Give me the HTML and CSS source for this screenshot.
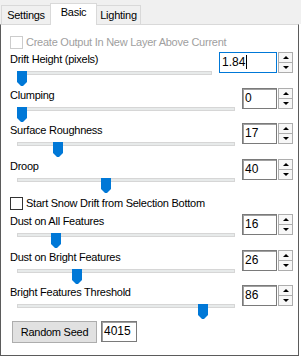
FILE: index.html
```html
<!DOCTYPE html>
<html lang="en">
<head>
    <meta charset="UTF-8">
    <title>Snow Drift</title>
    <link rel="stylesheet" href="styles.css">
</head>
<body>
    <div class="tabs">
        <div class="tab tab-settings">Settings</div>
        <div class="tab tab-basic active">Basic</div>
        <div class="tab tab-lighting">Lighting</div>
    </div>
    <div class="panel">
        <div class="check disabled"><span class="box"></span>Create Output In New Layer Above Current</div>

        <div class="field">
            <div class="ctl">
                <div class="label">Drift Height (pixels)</div>
                <div class="slider"><div class="track"></div><svg class="thumb" style="left: 0px" viewBox="0 0 10 15"><polygon points="0,0 10,0 10,11 6,15 4,15 0,11"/></svg></div>
            </div>
            <div class="spin wide focused">
                <div class="spin-value">1.84<span class="caret"></span></div>
                <div class="spin-btns"><span class="up"></span><span class="down"></span></div>
            </div>
        </div>

        <div class="field">
            <div class="ctl">
                <div class="label">Clumping</div>
                <div class="slider"><div class="track"></div><svg class="thumb" style="left: 0px" viewBox="0 0 10 15"><polygon points="0,0 10,0 10,11 6,15 4,15 0,11"/></svg></div>
            </div>
            <div class="spin">
                <div class="spin-value">0</div>
                <div class="spin-btns"><span class="up"></span><span class="down"></span></div>
            </div>
        </div>

        <div class="field">
            <div class="ctl">
                <div class="label">Surface Roughness</div>
                <div class="slider"><div class="track"></div><svg class="thumb" style="left: 36px" viewBox="0 0 10 15"><polygon points="0,0 10,0 10,11 6,15 4,15 0,11"/></svg></div>
            </div>
            <div class="spin">
                <div class="spin-value">17</div>
                <div class="spin-btns"><span class="up"></span><span class="down"></span></div>
            </div>
        </div>

        <div class="field">
            <div class="ctl">
                <div class="label">Droop</div>
                <div class="slider"><div class="track"></div><svg class="thumb" style="left: 84px" viewBox="0 0 10 15"><polygon points="0,0 10,0 10,11 6,15 4,15 0,11"/></svg></div>
            </div>
            <div class="spin">
                <div class="spin-value">40</div>
                <div class="spin-btns"><span class="up"></span><span class="down"></span></div>
            </div>
        </div>

        <div class="check second"><span class="box"></span>Start Snow Drift from Selection Bottom</div>

        <div class="field">
            <div class="ctl">
                <div class="label">Dust on All Features</div>
                <div class="slider"><div class="track"></div><svg class="thumb" style="left: 34px" viewBox="0 0 10 15"><polygon points="0,0 10,0 10,11 6,15 4,15 0,11"/></svg></div>
            </div>
            <div class="spin">
                <div class="spin-value">16</div>
                <div class="spin-btns"><span class="up"></span><span class="down"></span></div>
            </div>
        </div>

        <div class="field">
            <div class="ctl">
                <div class="label">Dust on Bright Features</div>
                <div class="slider"><div class="track"></div><svg class="thumb" style="left: 55px" viewBox="0 0 10 15"><polygon points="0,0 10,0 10,11 6,15 4,15 0,11"/></svg></div>
            </div>
            <div class="spin">
                <div class="spin-value">26</div>
                <div class="spin-btns"><span class="up"></span><span class="down"></span></div>
            </div>
        </div>

        <div class="field">
            <div class="ctl">
                <div class="label">Bright Features Threshold</div>
                <div class="slider"><div class="track"></div><svg class="thumb" style="left: 181px" viewBox="0 0 10 15"><polygon points="0,0 10,0 10,11 6,15 4,15 0,11"/></svg></div>
            </div>
            <div class="spin">
                <div class="spin-value">86</div>
                <div class="spin-btns"><span class="up"></span><span class="down"></span></div>
            </div>
        </div>

        <div class="seed-row">
            <button class="btn">Random Seed</button>
            <div class="seed">4015</div>
        </div>
    </div>
</body>
</html>
```

FILE: styles.css
```css
body {
    margin: 0;
    width: 301px;
    height: 357px;
    font-family: "Liberation Sans", Arial, sans-serif;
    font-size: 11px;
    letter-spacing: -0.25px;
    color: #000;
    background: #fff;
}
.tabs {
    display: flex;
    align-items: flex-end;
    height: 24px;
    padding-left: 1px;
    background: #f0f0f0;
}
.tab {
    box-sizing: border-box;
    height: 19px;
    padding-top: 3px;
    margin-right: -1px;
    line-height: 13px;
    text-align: center;
    border: 1px solid #d9d9d9;
    border-bottom: 0;
    background: #f0f0f0;
}
.tab.active {
    position: relative;
    z-index: 1;
    height: 22px;
    padding-top: 2px;
    margin-bottom: -1px;
    background: #fff;
}
.tab-settings {
    width: 50px;
}
.tab-basic {
    width: 47px;
}
.tab-lighting {
    width: 45px;
}
.panel {
    box-sizing: border-box;
    width: 299px;
    height: 332px;
    padding: 11px 5px 0 9px;
    border: 1px solid #5b5b5b;
    border-top-color: #d9d9d9;
}
.check {
    display: flex;
    align-items: center;
    height: 13px;
    line-height: 13px;
    margin-bottom: 3px;
    white-space: nowrap;
}
.check .box {
    box-sizing: border-box;
    width: 13px;
    height: 13px;
    margin-right: 3px;
    border: 1px solid #333;
    background: #fff;
}
.check.disabled {
    color: #a0a0a0;
}
.check.disabled .box {
    border-color: #ccc;
}
.check.second {
    margin: 3px 0 4px;
}
.field {
    display: flex;
    height: 35.5px;
}
.ctl {
    flex: 1;
    min-width: 0;
}
.label {
    height: 14px;
    line-height: 14px;
    white-space: nowrap;
}
.slider {
    position: relative;
    height: 15px;
    margin: 1px 7px 0;
}
.track {
    box-sizing: border-box;
    height: 4px;
    margin-top: 5px;
    border: 1px solid #d6d6d6;
    background: #e7eaea;
}
.thumb {
    position: absolute;
    top: 0;
    width: 10px;
    height: 15px;
    fill: #0078d7;
}
.spin {
    display: flex;
    gap: 1px;
    height: 21px;
}
.spin-value {
    box-sizing: border-box;
    width: 35px;
    height: 21px;
    padding-left: 2px;
    border: 1px solid #7a7a7a;
    box-shadow: inset 1px 1px 0 #a0a0a0;
    font-size: 12px;
    line-height: 19px;
    letter-spacing: 0;
    background: #fff;
}
.spin.wide .spin-value {
    width: 58px;
}
.spin.focused .spin-value {
    border-color: #0078d7;
    box-shadow: none;
}
.caret {
    display: inline-block;
    width: 1px;
    height: 14px;
    margin-left: 1px;
    vertical-align: -3px;
    background: #000;
}
.spin-btns {
    display: flex;
    flex-direction: column;
    width: 15px;
}
.spin-btns span {
    flex: 1;
    display: flex;
    align-items: center;
    justify-content: center;
    border: 1px solid #adadad;
    background: #f7f7f7;
}
.spin-btns .down {
    border-top: 0;
}
.spin-btns .up::after,
.spin-btns .down::after {
    content: "";
    border-left: 3px solid transparent;
    border-right: 3px solid transparent;
}
.spin-btns .up::after {
    border-bottom: 3px solid #000;
}
.spin-btns .down::after {
    border-top: 3px solid #000;
}
.seed-row {
    display: flex;
    align-items: center;
    gap: 4px;
    margin-left: 2px;
}
.btn {
    box-sizing: border-box;
    width: 85px;
    height: 22px;
    padding: 0;
    border: 1px solid #adadad;
    background: #e1e1e1;
    font: inherit;
    letter-spacing: inherit;
    color: #000;
}
.seed {
    box-sizing: border-box;
    width: 36px;
    height: 21px;
    padding-left: 2px;
    border: 1px solid #7a7a7a;
    box-shadow: inset 1px 1px 0 #a0a0a0;
    font-size: 12px;
    line-height: 19px;
    letter-spacing: 0;
}
```
